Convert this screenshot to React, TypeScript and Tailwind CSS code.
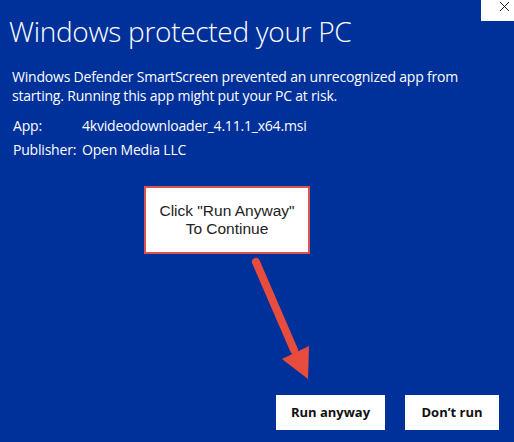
const Arrow = () => (
  <svg className="absolute left-0 top-0" width="514" height="442" viewBox="0 0 514 442">
    <line x1="256" y1="262" x2="294" y2="350" stroke="#e84c3d" strokeWidth="8" strokeLinecap="round" />
    <polygon points="282,359 309,346 308,379" fill="#e84c3d" />
  </svg>
);

const App = () => {
  return (
    <div
      className="relative flex h-[442px] w-[514px] flex-col overflow-hidden bg-[#00319b] text-white"
      style={{ fontFamily: '"Open Sans", "Noto Sans", sans-serif' }}
    >
      <div className="absolute right-0 top-0 flex h-[21px] w-[33px] items-start justify-end bg-white pr-[4px] pt-[1px]">
        <svg width="11" height="11" viewBox="0 0 11 11">
          <path d="M1 1 L10 10 M10 1 L1 10" stroke="#222" strokeWidth="1" />
        </svg>
      </div>

      <h1 className="pl-[9px] pt-[12px] text-[28px] font-light leading-[38px] tracking-[-0.3px]">
        Windows protected your PC
      </h1>

      <p className="mt-[17px] w-[480px] pl-[12px] text-[14px] leading-[19px] tracking-[-0.2px]">
        Windows Defender SmartScreen prevented an unrecognized app from starting. Running this app might put your PC at
        risk.
      </p>

      <div className="mt-[9px] flex flex-col pl-[13px] text-[14px] leading-[24px] tracking-[-0.2px]">
        <div className="flex">
          <span className="w-[69px]">App:</span>
          <span>4kvideodownloader_4.11.1_x64.msi</span>
        </div>
        <div className="flex">
          <span className="w-[69px]">Publisher:</span>
          <span>Open Media LLC</span>
        </div>
      </div>

      <div className="flex-1" />

      <div className="flex justify-end gap-[20px] pb-[12px] pr-[15px]">
        <button className="h-[35px] w-[109px] bg-white text-[13px] font-bold text-[#111]">Run anyway</button>
        <button className="h-[35px] w-[94px] bg-white text-[13px] font-bold text-[#111]">Don’t run</button>
      </div>

      <Arrow />

      <div
        className="absolute left-[144px] top-[186px] flex h-[68px] w-[166px] flex-col items-center justify-center border-2 border-[#d9534f] bg-white text-[15.5px] leading-[18px] text-[#222]"
        style={{ fontFamily: '"Liberation Sans", Arial, sans-serif' }}
      >
        <span>Click "Run Anyway"</span>
        <span>To Continue</span>
      </div>
    </div>
  );
};

export default App;
